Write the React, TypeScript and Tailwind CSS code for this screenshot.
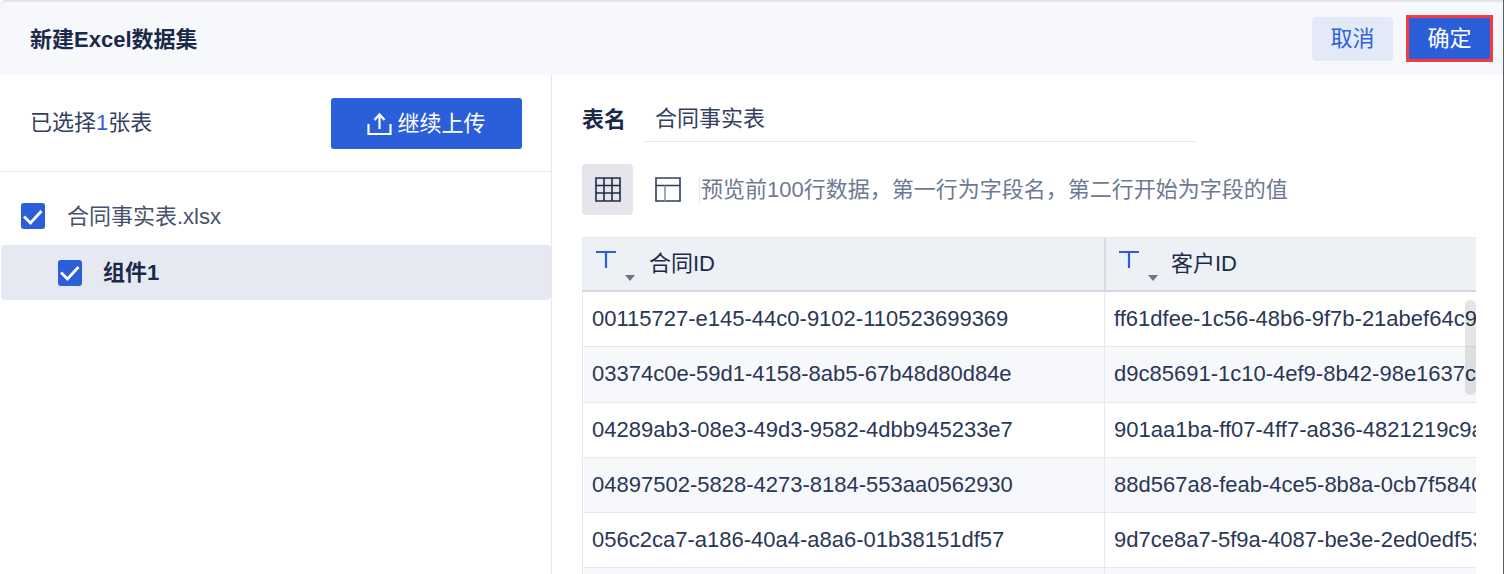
const rows = [
  ["00115727-e145-44c0-9102-110523699369", "ff61dfee-1c56-48b6-9f7b-21abef64c9d1"],
  ["03374c0e-59d1-4158-8ab5-67b48d80d84e", "d9c85691-1c10-4ef9-8b42-98e1637c0a2e"],
  ["04289ab3-08e3-49d3-9582-4dbb945233e7", "901aa1ba-ff07-4ff7-a836-4821219c9a11"],
  ["04897502-5828-4273-8184-553aa0562930", "88d567a8-feab-4ce5-8b8a-0cb7f5840e12"],
  ["056c2ca7-a186-40a4-a8a6-01b38151df57", "9d7ce8a7-5f9a-4087-be3e-2ed0edf53a10"],
  ["", ""],
];

function Check({ className = "" }: { className?: string }) {
  return (
    <span className={`flex h-[26px] w-[24px] shrink-0 items-center justify-center rounded-[3px] bg-[#2b5fd9] ${className}`}>
      <svg width="22" height="23" viewBox="0 0 22 23" fill="none" aria-hidden="true">
        <path d="M2 11.5 L8.5 18 L19.5 6" stroke="#fff" strokeWidth="2.8" />
      </svg>
    </span>
  );
}

function ColumnHead({ label, first }: { label: string; first?: boolean }) {
  return (
    <div
      className={`relative flex h-[52px] items-center bg-[#edf0f5] ${
        first ? "w-[521px] pl-[66px]" : "w-[372px] border-l-2 border-[#d8dbe2] pl-[65px]"
      }`}
    >
      <svg className="absolute left-[12px] top-[12px]" width="22" height="20" viewBox="0 0 22 20" fill="none" aria-hidden="true">
        <path d="M1 2 H21 M11 2 V18" stroke="#2b5fd9" strokeWidth="2.2" />
      </svg>
      <svg className="absolute left-[41px] top-[36px]" width="12" height="8" viewBox="0 0 12 8" aria-hidden="true">
        <path d="M1 1 H11 L6 7 Z" fill="#6b7488" />
      </svg>
      <span className="text-[22px] leading-none text-[#1c2a4a]">{label}</span>
    </div>
  );
}

export default function App() {
  return (
    <div className="h-[574px] w-[1504px] overflow-hidden border-r border-[#5a5d66] bg-white font-['Liberation_Sans','Noto_Sans_CJK_SC',sans-serif] text-[#1c2a4a]">
      <header className="flex h-[75px] items-center justify-between rounded-tl-[6px] border-t-2 border-[#e3e5ea] bg-[#f7f8fc] pl-[30px] pr-[10px]">
        <h1 className="pt-[2px] text-[22px] font-bold">新建Excel数据集</h1>
        <div className="flex items-center gap-[13px]">
          <button className="flex h-[44px] w-[81px] items-center justify-center rounded-[4px] bg-[#e3eaf7] text-[22px] text-[#2f62d8]">
            取消
          </button>
          <button className="flex h-[47px] w-[87px] items-center justify-center border-[3px] border-[#f53b3f] bg-[#2b5fd9] text-[22px] text-white">
            确定
          </button>
        </div>
      </header>

      <div className="flex h-[499px]">
        <aside className="w-[552px] shrink-0 border-r border-[#e6e8ee] pl-px">
          <div className="flex h-[97px] items-center justify-between border-b border-[#e6e8ee] pb-[2px] pl-[29px] pr-[29px]">
            <span className="text-[22px] text-[#33415f]">
              已选择<span className="text-[#2f62d8]">1</span>张表
            </span>
            <button className="mt-[2px] flex h-[51px] w-[191px] items-center justify-center gap-[5px] rounded-[3px] bg-[#2b5fd9] text-[22px] text-white">
              <svg width="25" height="25" viewBox="0 0 25 25" fill="none" aria-hidden="true">
                <path d="M1.5 13 V23 H23.5 V13 M12.5 18 V4 M7.5 9 L12.5 3.5 L17.5 9" stroke="#fff" strokeWidth="2.2" />
              </svg>
              继续上传
            </button>
          </div>
          <div className="flex h-[73px] items-end gap-[22px] pb-[14px] pl-[20px]">
            <Check className="mb-[2px]" />
            <span className="text-[22px] leading-[28px] text-[#46526c]">合同事实表.xlsx</span>
          </div>
          <div className="flex h-[55px] items-center gap-[21px] rounded-[4px] bg-[#e6e9f1] pl-[57px]">
            <Check />
            <span className="text-[22px] font-bold">组件1</span>
          </div>
        </aside>

        <main className="min-w-0 flex-1 pl-[30px] pr-[27px]">
          <div className="flex h-[67px] items-end">
            <span className="w-[62px] pb-[6px] text-[22px] font-bold">表名</span>
            <span className="w-[552px] border-b border-[#e6e8ee] pb-[7px] pl-[11px] text-[22px] leading-[30px] text-[#33415f]">
              合同事实表
            </span>
          </div>
          <div className="mt-[22px] flex h-[51px] items-center">
            <span className="flex h-[51px] w-[51px] items-center justify-center rounded-[4px] bg-[#e4e6eb]">
              <svg width="26" height="25" viewBox="0 0 26 25" fill="none" aria-hidden="true">
                <path d="M1 1 H25 V24 H1 Z M1 8.5 H25 M1 16 H25 M9 1 V24 M17 1 V24" stroke="#1c2a4a" strokeWidth="1.6" />
              </svg>
            </span>
            <span className="ml-[22px] flex">
              <svg width="26" height="25" viewBox="0 0 26 25" fill="none" aria-hidden="true">
                <path d="M1 1 H25 V24 H1 Z M1 8.5 H25" stroke="#2f3e60" strokeWidth="1.6" />
                <path d="M10 8.5 V24" stroke="#8894aa" strokeWidth="1.6" />
              </svg>
            </span>
            <span className="ml-[18px] border-l border-[#e6e8ee] pl-px text-[22px] leading-[28px] text-[#6e7a90]">
              预览前100行数据，第一行为字段名，第二行开始为字段的值
            </span>
          </div>

          <div className="relative mt-[22px] overflow-hidden border-t border-[#e6e8ee]">
            <div className="flex w-[1000px] border-b-2 border-[#d3d6de] border-l border-l-[#e6e8ee]">
              <ColumnHead label="合同ID" first />
              <ColumnHead label="客户ID" />
            </div>
            {rows.map((row, i) => (
              <div
                key={i}
                className={`flex h-[55.25px] w-[1000px] items-center border-b border-l border-[#e6e8ee] text-[22px] text-[#2a3755] ${
                  i % 2 === 1 ? "bg-[#f7f8fc]" : "bg-white"
                }`}
              >
                <div className="flex h-full w-[521px] shrink-0 items-center pb-px pl-[9px]">{row[0]}</div>
                <div className="flex h-full w-[372px] shrink-0 items-center whitespace-nowrap border-l border-[#e6e8ee] pb-px pl-[9px]">
                  {row[1]}
                </div>
              </div>
            ))}
            <div className="absolute right-0 top-[62px] h-[95px] w-[11px] rounded-[5px] bg-black/10" />
          </div>
        </main>
      </div>
    </div>
  );
}
